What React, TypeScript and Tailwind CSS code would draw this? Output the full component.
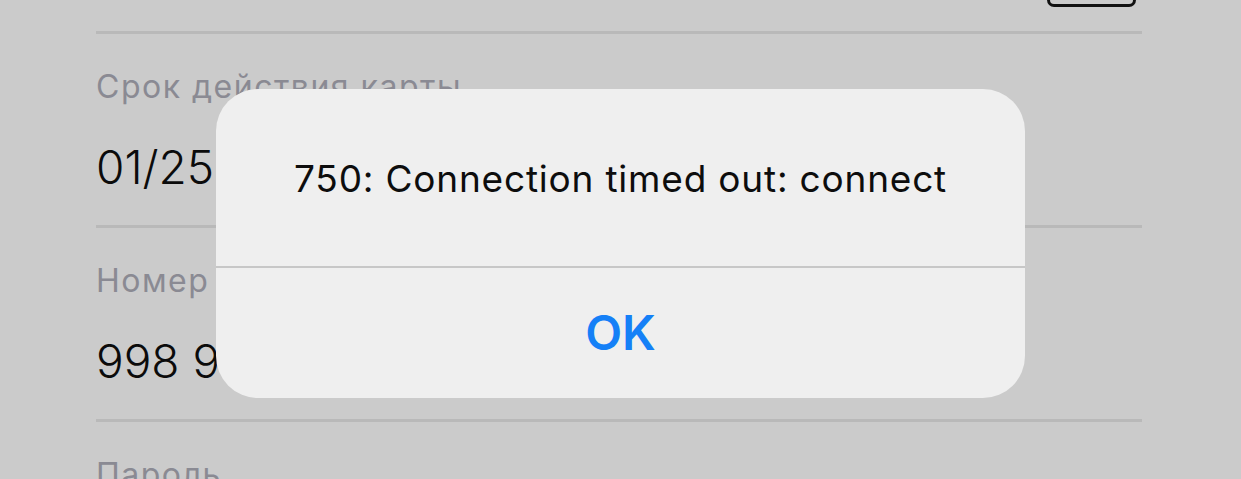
const font = { fontFamily: 'Inter, "Noto Sans", sans-serif' }

const fields = [
  { label: 'Срок действия карты', value: '01/25' },
  { label: 'Номер телефона', value: '998 90 123 45 67' },
  { label: 'Пароль', value: '' },
]

function Field({ label, value }: { label: string; value: string }) {
  return (
    <div>
      <div className="h-[3px] bg-[#b9b9b9]" />
      <div className="mt-[35px] text-[32px] leading-[36px] tracking-[1.5px] text-[#8a8a93]">{label}</div>
      <div className="mt-[34px] h-[56px] text-[46px] leading-[56px] font-light text-[#0b0b0b]">{value}</div>
      <div className="h-[30px]" />
    </div>
  )
}

function Alert() {
  return (
    <div className="absolute inset-0 flex justify-center pt-[89px]">
      <div className="flex h-[309px] w-[809px] flex-col overflow-hidden rounded-[42px] bg-[#efefef]">
        <div className="flex h-[177px] items-center justify-center pt-[3px] text-[37px] leading-[44px] tracking-[0.8px] text-[#0d0d0d]">
          750: Connection timed out: connect
        </div>
        <div className="h-[2px] bg-[#c7c7c7]" />
        <div className="flex flex-1 items-center justify-center text-[48px] leading-[56px] font-semibold text-[#1580f7]">
          OK
        </div>
      </div>
    </div>
  )
}

export default function App() {
  return (
    <div className="relative h-[479px] w-full overflow-hidden bg-[#cbcbcb]" style={font}>
      <div className="ml-[96px] w-[1046px]">
        {/* bottom edge of the control above */}
        <div className="flex justify-end pr-[6px]">
          <div className="h-[7px] w-[89px] rounded-b-[8px] border-[3px] border-t-0 border-[#111]" />
        </div>
        <div className="h-[24px]" />
        {fields.map((f) => (
          <Field key={f.label} label={f.label} value={f.value} />
        ))}
      </div>
      <Alert />
    </div>
  )
}
